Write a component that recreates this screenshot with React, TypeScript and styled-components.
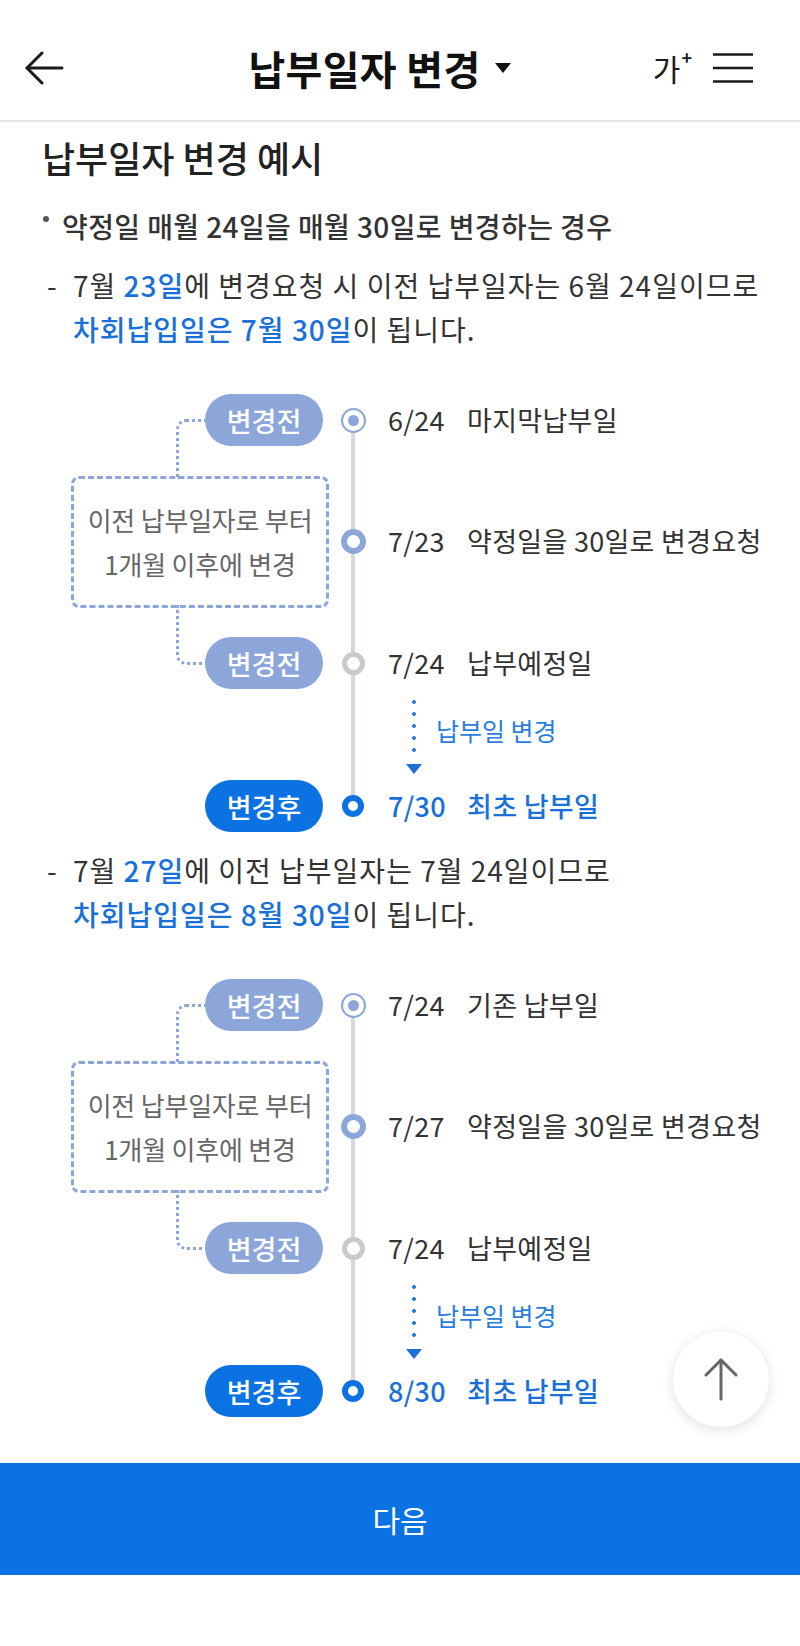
import React from 'react';
import styled, { createGlobalStyle, css } from 'styled-components';

const GlobalStyle = createGlobalStyle`
  html, body {
    margin: 0;
    padding: 0;
    background: #fff;
  }
  body {
    font-family: "Noto Sans CJK KR", "Noto Sans", sans-serif;
    color: #333;
  }
  * {
    box-sizing: border-box;
  }
`;

const BLUE = '#0a72e2';
const MUTED = '#8ca6da';
const TEXT_BLUE = '#1a70d9';

const Page = styled.div`
    width: 800px;
    height: 1646px;
    display: flex;
    flex-direction: column;
    background: #fff;
    overflow: hidden;
`;

/* ---------- header ---------- */

const Header = styled.header`
    flex: none;
    height: 122px;
    padding-top: 16px;
    display: grid;
    grid-template-columns: 120px 1fr 160px;
    align-items: center;
    border-bottom: 2px solid #e4e4e4;
`;

const IconButton = styled.button`
    border: 0;
    padding: 0;
    background: none;
    cursor: pointer;
    display: flex;
    align-items: center;
    color: #1a1a1a;
`;

const BackButton = styled(IconButton)`
    margin-left: 24px;
`;

const TitleWrap = styled.div`
    display: flex;
    align-items: center;
    justify-content: center;
    gap: 15px;
`;

const Title = styled.h1`
    margin: 0;
    font-size: 40px;
    font-weight: 700;
    line-height: 1.2;
    color: #111;
    letter-spacing: 0.3px;
`;

const HeaderActions = styled.div`
    display: flex;
    align-items: center;
    justify-content: flex-end;
    gap: 20px;
    padding-right: 46px;
`;

const FontSizeButton = styled(IconButton)`
    font-family: inherit;
    font-size: 30px;
    line-height: 1;
    color: #1a1a1a;
    align-items: flex-start;

    sup {
        font-size: 18px;
        font-weight: 700;
        margin-left: 1px;
        margin-top: -5px;
        vertical-align: baseline;
    }
`;

/* ---------- content ---------- */

const Content = styled.main`
    flex: 1;
    padding: 13px 0 0 42px;
    overflow: hidden;
`;

const Heading = styled.h2`
    margin: 0;
    font-size: 36px;
    font-weight: 500;
    line-height: 44px;
    color: #222;
`;

const Bullet = styled.p`
    margin: 27px 0 0;
    display: flex;
    align-items: flex-start;
    font-size: 28px;
    font-weight: 500;
    line-height: 40px;
    letter-spacing: 0.4px;
    color: #333;
`;

const BulletDot = styled.span`
    flex: none;
    width: 6px;
    height: 6px;
    margin: 10px 13px 0 1px;
    border-radius: 50%;
    background: #555;
`;

const Sentence = styled.p<{ $top: number }>`
    margin: ${p => p.$top}px 0 0;
    padding-left: 31px;
    text-indent: -26px;
    font-size: 28px;
    line-height: 44px;
    letter-spacing: 1px;
    color: #333;
    white-space: nowrap;
`;

const Dash = styled.span`
    display: inline-block;
    width: 26px;
    text-indent: 0;
`;

const Em = styled.span`
    color: ${TEXT_BLUE};
    font-weight: 500;
`;

/* ---------- timeline diagram ---------- */

const Timeline = styled.div`
    margin: 43px 0 0 29px;
    display: grid;
    grid-template-columns: 134px 118px 60px 1fr;
`;

const Rail = styled.div`
    grid-column: 3;
    grid-row: 1 / 6;
    justify-self: center;
    width: 4px;
    margin: 26px 0;
    background: #d5d8df;
`;

const Pill = styled.div<{ $row: number; $tone: 'muted' | 'blue' }>`
    grid-column: 2;
    grid-row: ${p => p.$row};
    align-self: center;
    height: 52px;
    border-radius: 26px;
    background: ${p => (p.$tone === 'blue' ? BLUE : MUTED)};
    color: #fff;
    font-size: 27px;
    font-weight: 500;
    display: flex;
    align-items: center;
    justify-content: center;
`;

const NoteBox = styled.div`
    grid-column: 1 / 3;
    grid-row: 2;
    position: relative;
    height: 132px;
    margin: 30px -6px 29px 0;
    border: 3px dashed ${MUTED};
    border-radius: 8px;
    display: flex;
    flex-direction: column;
    align-items: center;
    justify-content: center;
    font-size: 26px;
    line-height: 44px;
    color: #666;
    letter-spacing: -0.2px;
    white-space: nowrap;

    /* dotted leaders to the pills above and below */
    &::before,
    &::after {
        content: '';
        position: absolute;
        left: 102px;
        width: 29px;
        height: 57px;
        border-left: 3px dotted ${MUTED};
    }
    &::before {
        top: -60px;
        border-top: 3px dotted ${MUTED};
        border-top-left-radius: 10px;
    }
    &::after {
        bottom: -60px;
        border-bottom: 3px dotted ${MUTED};
        border-bottom-left-radius: 10px;
    }
`;

type DotKind = 'current' | 'request' | 'scheduled' | 'changed';

const dotStyles: Record<DotKind, ReturnType<typeof css>> = {
    current: css`
        width: 25px;
        height: 25px;
        border: 2.5px solid ${MUTED};
        &::after {
            content: '';
            width: 11px;
            height: 11px;
            border-radius: 50%;
            background: ${MUTED};
        }
    `,
    request: css`
        width: 25px;
        height: 25px;
        border: 6.5px solid ${MUTED};
    `,
    scheduled: css`
        width: 23px;
        height: 23px;
        border: 5px solid #c9cacf;
    `,
    changed: css`
        width: 22px;
        height: 22px;
        border: 6px solid ${BLUE};
    `,
};

const Dot = styled.span<{ $row: number; $kind: DotKind }>`
    grid-column: 3;
    grid-row: ${p => p.$row};
    justify-self: center;
    align-self: center;
    z-index: 1;
    border-radius: 50%;
    background: #fff;
    display: flex;
    align-items: center;
    justify-content: center;
    ${p => dotStyles[p.$kind]}
`;

const Label = styled.div<{ $row: number; $accent?: boolean }>`
    grid-column: 4;
    grid-row: ${p => p.$row};
    align-self: center;
    display: flex;
    align-items: center;
    padding-left: 5px;
    font-size: 27px;
    line-height: 1.2;
    letter-spacing: 0.3px;
    white-space: nowrap;
    color: ${p => (p.$accent ? TEXT_BLUE : '#333')};
    font-weight: ${p => (p.$accent ? 500 : 400)};
`;

const DateText = styled.span`
    flex: none;
    width: 79px;
`;

const Shift = styled.div`
    grid-column: 4;
    grid-row: 4;
    display: flex;
    align-items: flex-start;
    gap: 14px;
    padding: 7px 0 6px 22px;
`;

const ShiftArrow = styled.div`
    flex: none;
    width: 17px;
    display: flex;
    flex-direction: column;
    align-items: center;
`;

const ShiftDots = styled.span`
    width: 4px;
    height: 64px;
    background-image: radial-gradient(circle, #2b7de0 1.7px, transparent 2.2px);
    background-size: 4px 12px;
    background-position: center top;
`;

const ShiftHead = styled.span`
    margin-top: 4px;
    width: 0;
    height: 0;
    border-left: 8.5px solid transparent;
    border-right: 8.5px solid transparent;
    border-top: 10px solid ${TEXT_BLUE};
`;

const ShiftText = styled.span`
    margin-top: 19px;
    font-size: 25px;
    line-height: 30px;
    color: #2b7de0;
`;

/* ---------- footer ---------- */

const Footer = styled.footer`
    flex: none;
    position: relative;
    background: #fff;
`;

const NextButton = styled.button`
    display: block;
    width: 100%;
    height: 112px;
    border: 0;
    background: ${BLUE};
    color: #fff;
    font-family: inherit;
    font-size: 30px;
    cursor: pointer;
`;

const BottomSpace = styled.div`
    height: 71px;
`;

const ScrollTop = styled.button`
    position: absolute;
    right: 30px;
    bottom: calc(100% + 35px);
    width: 98px;
    height: 98px;
    border-radius: 50%;
    border: 1px solid #f1f1f1;
    background: #fff;
    box-shadow: 0 3px 12px rgba(0, 0, 0, 0.1);
    display: flex;
    align-items: center;
    justify-content: center;
    cursor: pointer;
`;

/* ---------- data ---------- */

interface Step {
    date: string;
    text: string;
}

interface Example {
    lead: React.ReactNode;
    result: React.ReactNode;
    steps: [Step, Step, Step, Step];
}

const examples: Example[] = [
    {
        lead: <>7월 <Em>23일</Em>에 변경요청 시 이전 납부일자는 6월 24일이므로</>,
        result: <><Em>차회납입일은 7월 30일</Em>이 됩니다.</>,
        steps: [
            { date: '6/24', text: '마지막납부일' },
            { date: '7/23', text: '약정일을 30일로 변경요청' },
            { date: '7/24', text: '납부예정일' },
            { date: '7/30', text: '최초 납부일' },
        ],
    },
    {
        lead: <>7월 <Em>27일</Em>에 이전 납부일자는 7월 24일이므로</>,
        result: <><Em>차회납입일은 8월 30일</Em>이 됩니다.</>,
        steps: [
            { date: '7/24', text: '기존 납부일' },
            { date: '7/27', text: '약정일을 30일로 변경요청' },
            { date: '7/24', text: '납부예정일' },
            { date: '8/30', text: '최초 납부일' },
        ],
    },
];

const ChangeTimeline: React.FC<{ steps: Step[] }> = ({ steps }) => {
    const [last, request, scheduled, changed] = steps;
    return (
        <Timeline>
            <Rail />

            <Pill $row={1} $tone="muted">변경전</Pill>
            <Dot $row={1} $kind="current" />
            <Label $row={1}><DateText>{last.date}</DateText>{last.text}</Label>

            <NoteBox>
                <span>이전 납부일자로 부터</span>
                <span>1개월 이후에 변경</span>
            </NoteBox>
            <Dot $row={2} $kind="request" />
            <Label $row={2}><DateText>{request.date}</DateText>{request.text}</Label>

            <Pill $row={3} $tone="muted">변경전</Pill>
            <Dot $row={3} $kind="scheduled" />
            <Label $row={3}><DateText>{scheduled.date}</DateText>{scheduled.text}</Label>

            <Shift>
                <ShiftArrow>
                    <ShiftDots />
                    <ShiftHead />
                </ShiftArrow>
                <ShiftText>납부일 변경</ShiftText>
            </Shift>

            <Pill $row={5} $tone="blue">변경후</Pill>
            <Dot $row={5} $kind="changed" />
            <Label $row={5} $accent><DateText>{changed.date}</DateText>{changed.text}</Label>
        </Timeline>
    );
};

export default function App() {
    return (
        <>
            <GlobalStyle />
            <Page>
                <Header>
                    <BackButton type="button" aria-label="뒤로가기">
                        <svg width="40" height="34" viewBox="0 0 40 34" fill="none" stroke="#1a1a1a" strokeWidth="3" strokeLinecap="round" strokeLinejoin="round">
                            <path d="M38 17H3" />
                            <path d="M18 2L3 17l15 15" />
                        </svg>
                    </BackButton>

                    <TitleWrap>
                        <Title>납부일자 변경</Title>
                        <svg width="16" height="10" viewBox="0 0 16 10">
                            <path d="M0 0h16L8 10z" fill="#111" />
                        </svg>
                    </TitleWrap>

                    <HeaderActions>
                        <FontSizeButton type="button" aria-label="글자 크기">
                            가<sup>+</sup>
                        </FontSizeButton>
                        <IconButton type="button" aria-label="전체메뉴">
                            <svg width="42" height="32" viewBox="0 0 42 32" stroke="#1a1a1a" strokeWidth="2.7">
                                <path d="M1 2.5h40M1 16h40M1 29.5h40" />
                            </svg>
                        </IconButton>
                    </HeaderActions>
                </Header>

                <Content>
                    <Heading>납부일자 변경 예시</Heading>
                    <Bullet>
                        <BulletDot />
                        약정일 매월 24일을 매월 30일로 변경하는 경우
                    </Bullet>

                    {examples.map((ex, i) => (
                        <React.Fragment key={i}>
                            <Sentence $top={i === 0 ? 17 : 16}>
                                <Dash>-</Dash>{ex.lead}
                                <br />
                                {ex.result}
                            </Sentence>
                            <ChangeTimeline steps={ex.steps} />
                        </React.Fragment>
                    ))}
                </Content>

                <Footer>
                    <ScrollTop type="button" aria-label="맨 위로">
                        <svg width="36" height="44" viewBox="0 0 36 44" fill="none" stroke="#666" strokeWidth="3" strokeLinecap="round" strokeLinejoin="round">
                            <path d="M18 42V3" />
                            <path d="M3 18L18 3l15 15" />
                        </svg>
                    </ScrollTop>
                    <NextButton type="button">다음</NextButton>
                    <BottomSpace />
                </Footer>
            </Page>
        </>
    );
}
